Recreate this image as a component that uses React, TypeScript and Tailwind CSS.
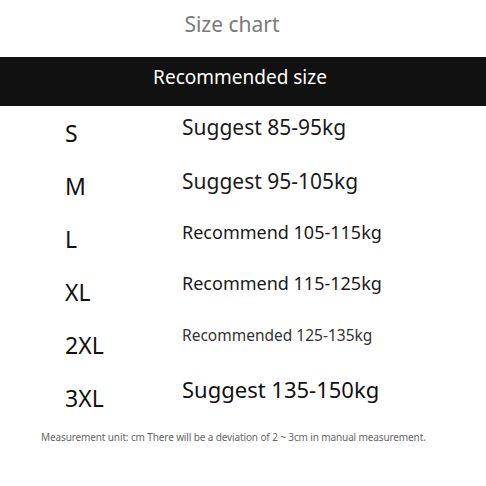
import React from 'react';

interface Row {
  size: string;
  text: string;
  textClass: string;
}

const rows: Row[] = [
  { size: 'S', text: 'Suggest 85-95kg', textClass: 'text-[21px] mt-[7px] text-[#1a1a1a]' },
  { size: 'M', text: 'Suggest 95-105kg', textClass: 'text-[21px] mt-[8px] text-[#1a1a1a]' },
  { size: 'L', text: 'Recommend 105-115kg', textClass: 'text-[18px] mt-[6px] text-[#1a1a1a]' },
  { size: 'XL', text: 'Recommend 115-125kg', textClass: 'text-[18px] mt-[4px] text-[#1a1a1a]' },
  { size: '2XL', text: 'Recommended 125-135kg', textClass: 'text-[15.5px] mt-[3px] text-[#333]' },
  { size: '3XL', text: 'Suggest 135-150kg', textClass: 'text-[22px] mt-[4px] text-[#111]' },
];

export default function App() {
  return (
    <div
      className="w-[486px] h-[486px] bg-white overflow-hidden flex flex-col"
      style={{ fontFamily: '"Noto Sans", "Open Sans", sans-serif' }}
    >
      <div className="h-[57px] flex items-center justify-center pr-[22px]">
        <span className="text-[21px] text-[#7a7a7a] leading-none -mt-[9px]">Size chart</span>
      </div>

      <div className="h-[49px] bg-[#111] flex items-center justify-center pr-[6px]">
        <span className="text-[19px] text-white leading-none -mt-[9px]">Recommended size</span>
      </div>

      <div className="flex flex-col">
        {rows.map((r) => (
          <div key={r.size} className="h-[53px] flex items-start">
            <div className="w-[182px] pl-[65px] pt-[12px] text-[23px] leading-[30px] text-[#111]">
              {r.size}
            </div>
            <div className={`leading-[28px] ${r.textClass}`}>{r.text}</div>
          </div>
        ))}
      </div>

      <div className="pl-[41px] mt-[6px] text-[10px] leading-[14px] tracking-[-0.12px] text-[#666]">
        Measurement unit: cm There will be a deviation of 2 ~ 3cm in manual measurement.
      </div>
    </div>
  );
}
